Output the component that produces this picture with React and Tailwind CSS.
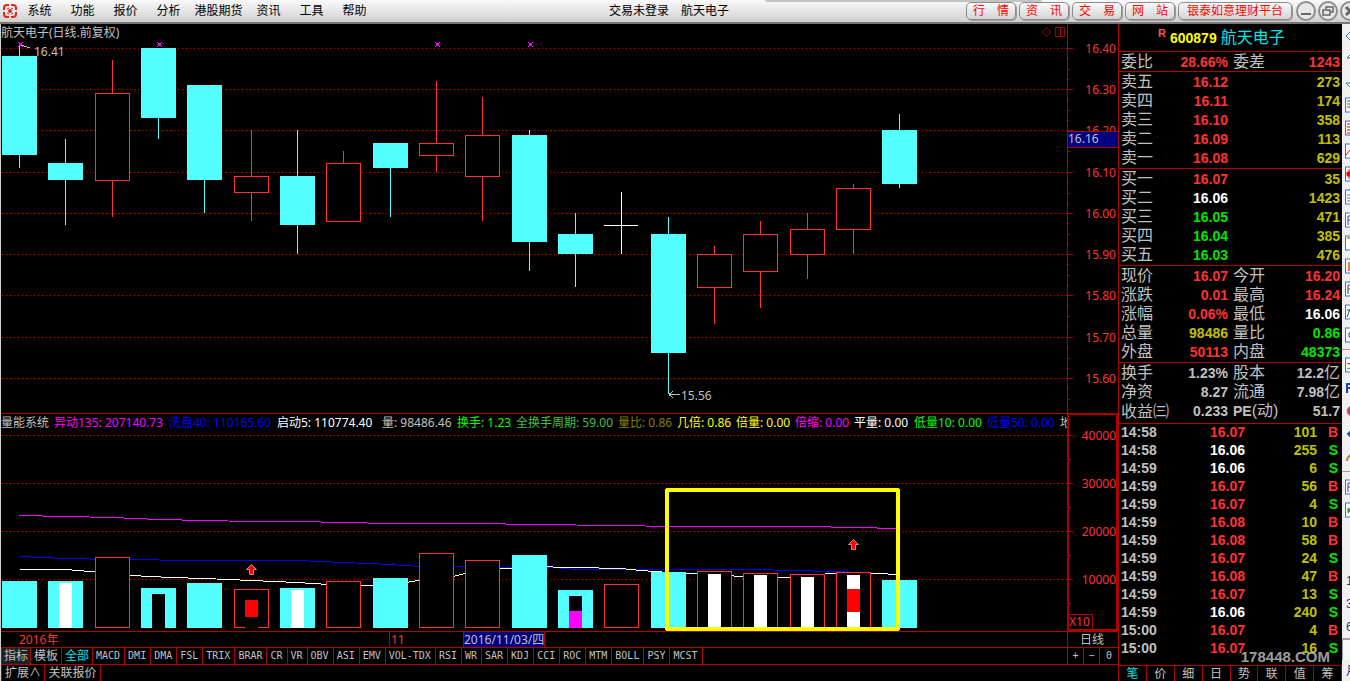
import { clsx } from "clsx";

const menuItems = ["系统", "功能", "报价", "分析", "港股期货", "资讯", "工具", "帮助"];
const linkButtons = ["行　情", "资　讯", "交　易", "网　站", "银泰如意理财平台"];

// kind: down = solid cyan, up = hollow red, flat = white cross
const candles = [
  { kind: "down", high: 16.41, top: 16.38, bottom: 16.14, low: 16.11 },
  { kind: "down", high: 16.18, top: 16.12, bottom: 16.08, low: 15.97 },
  { kind: "up", high: 16.37, top: 16.29, bottom: 16.08, low: 15.99 },
  { kind: "down", high: 16.4, top: 16.4, bottom: 16.23, low: 16.18 },
  { kind: "down", high: 16.31, top: 16.31, bottom: 16.08, low: 16.0 },
  { kind: "up", high: 16.2, top: 16.09, bottom: 16.05, low: 15.98 },
  { kind: "down", high: 16.2, top: 16.09, bottom: 15.97, low: 15.9 },
  { kind: "up", high: 16.15, top: 16.12, bottom: 15.98, low: 15.98 },
  { kind: "down", high: 16.17, top: 16.17, bottom: 16.11, low: 15.99 },
  { kind: "up", high: 16.32, top: 16.17, bottom: 16.14, low: 16.1 },
  { kind: "up", high: 16.28, top: 16.19, bottom: 16.09, low: 15.98 },
  { kind: "down", high: 16.2, top: 16.19, bottom: 15.93, low: 15.86 },
  { kind: "down", high: 16.0, top: 15.95, bottom: 15.9, low: 15.82 },
  { kind: "flat", high: 16.05, top: 15.97, bottom: 15.97, low: 15.9 },
  { kind: "down", high: 15.99, top: 15.95, bottom: 15.66, low: 15.56 },
  { kind: "up", high: 15.92, top: 15.9, bottom: 15.82, low: 15.73 },
  { kind: "up", high: 15.98, top: 15.95, bottom: 15.86, low: 15.77 },
  { kind: "up", high: 16.0, top: 15.96, bottom: 15.9, low: 15.84 },
  { kind: "up", high: 16.07, top: 16.06, bottom: 15.96, low: 15.9 },
  { kind: "down", high: 16.24, top: 16.2, bottom: 16.07, low: 16.06 },
];

// top of each volume bar, and the blocks drawn inside it: [top, bottom, color]
const volumes = [
  { top: 167 },
  { top: 167, inner: [[169, 214, "#ffffff"]] },
  { top: 143 },
  { top: 174, inner: [[180, 214, "#000000"]] },
  { top: 169 },
  { top: 175, inner: [[186, 203, "#ff0000"], [203, 214, "#000000"]] },
  { top: 174, inner: [[176, 214, "#ffffff"]] },
  { top: 167 },
  { top: 164 },
  { top: 139 },
  { top: 146 },
  { top: 141 },
  { top: 176, inner: [[182, 197, "#000000"], [197, 214, "#ff00ff"]] },
  { top: 170 },
  { top: 158 },
  { top: 157, inner: [[160, 214, "#ffffff"]] },
  { top: 159, inner: [[161, 214, "#ffffff"]] },
  { top: 160, inner: [[163, 214, "#ffffff"]] },
  { top: 158, inner: [[161, 175, "#ffffff"], [175, 198, "#ff0000"], [198, 214, "#ffffff"]] },
  { top: 166 },
];

const averages = [
  {
    color: "#ff00ff",
    points: "18,101 64,102 111,103 157,105 203,106 250,107 296,107 342,108 389,109 481,109 528,110 620,111 667,112 806,112 852,113 898,114",
  },
  {
    color: "#0000ff",
    points: "18,142 64,144 111,145 203,146 296,146 342,148 389,150 419,152 454,152 481,153 552,153 574,155 759,155 784,156 839,157 898,160",
  },
  {
    color: "#ffffff",
    points: "18,155 64,155 89,157 129,161 169,163 203,164 250,166 296,168 342,171 374,171 404,168 435,163 451,162 481,155 510,154 528,152 574,153 620,154 639,156 667,158 689,159 713,160 739,162 759,163 783,163 806,161 829,159 852,158 874,159 898,160",
  },
];

const priceLabels = ["16.40", "16.30", "16.20", "16.10", "16.00", "15.90", "15.80", "15.70", "15.60"];
const volumeLabels = ["40000", "30000", "20000", "10000"];

const readings = [
  { text: "量能系统", style: "w-[53px] text-[#c0c0c0]" },
  { text: "异动135: 207140.73", style: "w-[115px] text-[#ff00ff]" },
  { text: "洗盘40: 110165.60", style: "w-[108px] text-[#0000ff]" },
  { text: "启动5: 110774.40", style: "w-[105px] text-white" },
  { text: "量: 98486.46", style: "w-[75px] text-[#c0c0c0]" },
  { text: "换手: 1.23", style: "w-[59px] text-[#00ff00]" },
  { text: "全换手周期: 59.00", style: "w-[102px] text-[#40c040]" },
  { text: "量比: 0.86", style: "w-[59px] text-[#808000]" },
  { text: "几倍: 0.86", style: "w-[59px] text-[#ffff00]" },
  { text: "倍量: 0.00", style: "w-[59px] text-[#ffff00]" },
  { text: "倍缩: 0.00", style: "w-[59px] text-[#ff00ff]" },
  { text: "平量: 0.00", style: "w-[60px] text-white" },
  { text: "低量10: 0.00", style: "w-[73px] text-[#00ff00]" },
  { text: "低量50: 0.00", style: "w-[73px] text-[#0000ff]" },
  { text: "地", style: "w-6 text-[#c0c0c0]" },
];

const indicators = [
  "MACD", "DMI", "DMA", "FSL", "TRIX", "BRAR", "CR", "VR", "OBV", "ASI", "EMV", "VOL-TDX",
  "RSI", "WR", "SAR", "KDJ", "CCI", "ROC", "MTM", "BOLL", "PSY", "MCST",
];

const RED = "text-[#ff3232]";
const GREEN = "text-[#00e600]";
const YELLOW = "text-[#c0c000]";
const GRAY = "text-[#c0c0c0]";
const WHITE = "text-white";

const asks = [
  ["卖五", "16.12", "273", RED],
  ["卖四", "16.11", "174", RED],
  ["卖三", "16.10", "358", RED],
  ["卖二", "16.09", "113", RED],
  ["卖一", "16.08", "629", RED],
];

const bids = [
  ["买一", "16.07", "35", RED],
  ["买二", "16.06", "1423", WHITE],
  ["买三", "16.05", "471", GREEN],
  ["买四", "16.04", "385", GREEN],
  ["买五", "16.03", "476", GREEN],
];

const quoteRows = [
  ["现价", "16.07", RED, "今开", "16.20", RED],
  ["涨跌", "0.01", RED, "最高", "16.24", RED],
  ["涨幅", "0.06%", RED, "最低", "16.06", WHITE],
  ["总量", "98486", YELLOW, "量比", "0.86", GREEN],
  ["外盘", "50113", RED, "内盘", "48373", GREEN],
];

const financeRows = [
  ["换手", "1.23%", GRAY, "股本", "12.2亿", GRAY],
  ["净资", "8.27", GRAY, "流通", "7.98亿", GRAY],
  ["收益㈢", "0.233", GRAY, "PE(动)", "51.7", GRAY],
];

const ticks = [
  ["14:58", "16.07", "101", "B"],
  ["14:58", "16.06", "255", "S"],
  ["14:59", "16.06", "6", "S"],
  ["14:59", "16.07", "56", "B"],
  ["14:59", "16.07", "4", "S"],
  ["14:59", "16.08", "10", "B"],
  ["14:59", "16.08", "58", "B"],
  ["14:59", "16.07", "24", "S"],
  ["14:59", "16.08", "47", "B"],
  ["14:59", "16.07", "13", "S"],
  ["14:59", "16.06", "240", "S"],
  ["15:00", "16.07", "4", "B"],
  ["15:00", "16.07", "16", "S"],
];

const quoteTabs = ["笔", "价", "细", "日", "势", "联", "值", "筹"];

const priceY = (price) => Math.round(24 + (16.4 - price) * 412.5);
const barX = (i) => 18 + Math.round(i * 46.33);

const Logo = () => (
  <svg width="14" height="14" viewBox="0 0 14 14" fill="none" stroke="#e0281e" strokeWidth="2">
    <path d="M6 1H4a3 3 0 0 0-3 3v2M8 1h2a3 3 0 0 1 3 3v2M6 13H4a3 3 0 0 1-3-3V8M8 13h2a3 3 0 0 0 3-3V8" />
    <path d="M4 5l2-1M8 4l2 1M4 9l2 1M8 10l2-1" strokeWidth="1" />
    <circle cx="7" cy="7" r="2" fill="#e0281e" stroke="none" />
  </svg>
);

const WindowButton = ({ label, children }) => (
  <button aria-label={label} className="shrink-0">
    <svg width="20" height="20" viewBox="0 0 20 20" fill="none" stroke="#666" strokeWidth="2">
      <circle cx="10" cy="10" r="9" fill="#e8e8e8" stroke="#8c8c8c" />
      {children}
    </svg>
  </button>
);

const Header = () => (
  <header className="relative flex h-6 items-center overflow-hidden border-b-2 border-[#777] bg-linear-to-b from-[#fafafa] to-[#d0d0d0] text-[12px] text-black">
    <div className="absolute top-0 right-[308px] left-[765px] h-[2px] rounded-b bg-[#c4c4c4]" />
    <nav className="flex flex-1 items-center">
      <span className="w-[18px] shrink-0 pl-[3px]">
        <Logo />
      </span>
      {menuItems.map((item) => (
        <button key={item} className={clsx("shrink-0 text-center", item.length > 2 ? "w-[57px]" : "w-[43px]")}>
          {item}
        </button>
      ))}
    </nav>
    <h1 className="w-[132px] whitespace-nowrap">交易未登录　航天电子</h1>
    <div className="flex flex-1 items-center justify-end gap-[3px]">
      {linkButtons.map((label) => (
        <button
          key={label}
          className={clsx(
            "h-[18px] shrink-0 rounded-[5px] border border-[#8c8c8c] bg-linear-to-b from-[#fbfbfb] to-[#d4d4d4] leading-[14px] text-[#ff0000] shadow-[1px_1px_0_#999]",
            label.length > 3 ? "px-2" : "px-[6px]"
          )}
        >
          {label}
        </button>
      ))}
      <div className="ml-px flex w-[54px] gap-[2px] overflow-hidden">
        <WindowButton label="最小化">
          <path d="M5 13h10" />
        </WindowButton>
        <WindowButton label="还原">
          <path d="M8 8V6h7v5h-3M5 9h7v5H5z" strokeWidth="1.5" />
        </WindowButton>
        <WindowButton label="关闭">
          <path d="M6 6l8 8M14 6l-8 8" strokeWidth="3" />
        </WindowButton>
      </div>
    </div>
  </header>
);

const Candle = ({ candle, x }) => {
  const high = priceY(candle.high);
  const top = priceY(candle.top);
  const bottom = priceY(candle.bottom);
  const low = priceY(candle.low);

  if (candle.kind === "flat") {
    return (
      <g fill="#ffffff">
        <rect x={x} y={high} width="1" height={low - high} />
        <rect x={x - 17} y={top} width="34" height="1" />
      </g>
    );
  }
  if (candle.kind === "down") {
    return (
      <g fill="#54ffff">
        <rect x={x} y={high} width="1" height={low - high} />
        <rect x={x - 17} y={top} width="35" height={bottom - top} />
      </g>
    );
  }
  return (
    <g fill="#ff3232">
      <rect x={x} y={high} width="1" height={low - high} />
      <rect x={x - 17} y={top} width="35" height={bottom - top + 1} />
      <rect x={x - 16} y={top + 1} width="33" height={bottom - top - 1} fill="#000000" />
    </g>
  );
};

const PriceChart = () => (
  <section className="flex">
    <div className="relative min-w-0 flex-1">
      <h2 className="absolute top-0 left-0 text-[12px] leading-[18px] text-[#c0c0c0]">航天电子(日线.前复权)</h2>
      <svg className="block h-[389px] w-full" shapeRendering="crispEdges">
        {priceLabels.map((label) => (
          <line
            key={label}
            x1="1"
            x2="100%"
            y1={priceY(Number(label)) + 0.5}
            y2={priceY(Number(label)) + 0.5}
            stroke="#b00000"
            strokeDasharray="1 3"
          />
        ))}
        {candles.map((candle, i) => (
          <Candle key={i} candle={candle} x={barX(i)} />
        ))}
        {[18, 157, 435, 528].map((x) => (
          <path
            key={x}
            d={`M${x - 1} 18h1v1h3v-1h1v1h-1v3h1v1h-1v-1h-3v1h-1v-1h1v-3h-1z`}
            fill="#ff00ff"
          />
        ))}
        <path d="M20 21l9 3M668 370.5h11M668 370.5l4 -3M668 370.5l4 3" stroke="#c0c0c0" fill="none" />
        <g fill="#c0c0c0" fontSize="12">
          <text x="33" y="32">16.41</text>
          <text x="680" y="376">15.56</text>
        </g>
      </svg>
      <div className="absolute top-[2px] right-px flex gap-[3px] text-[#a00000]">
        <button aria-label="标记">
          <svg width="11" height="12" fill="none" stroke="currentColor">
            <path d="M5.5 1.5l4.5 4.5-4.5 4.5L1 6z" />
          </svg>
        </button>
        <button aria-label="分栏">
          <svg width="11" height="12" fill="none" stroke="currentColor" shapeRendering="crispEdges">
            <path d="M.5 1.5h9v9h-9zM5.5 1.5v9" />
          </svg>
        </button>
      </div>
    </div>
    <svg className="block h-[389px] w-[51px] shrink-0 text-[12px]" fill="#ff3232">
      <rect width="1" height="389" fill="#b00000" />
      {priceLabels.map((label) => {
        const y = priceY(Number(label));
        return (
          <g key={label}>
            <path
              d={`M1 ${y + 0.5}h5M1 ${y + 10.5}h1M1 ${y + 21.5}h2M1 ${y + 31.5}h1`}
              stroke="#b00000"
              shapeRendering="crispEdges"
            />
            <text x="49" y={y + 5} textAnchor="end">{label}</text>
          </g>
        );
      })}
      <rect y="107" width="51" height="17" fill="#b00000" />
      <rect x="1" y="108" width="50" height="15" fill="#000080" />
      <text x="1" y="119" fill="#c0c0c0">16.16</text>
    </svg>
  </section>
);

const VolumeChart = () => (
  <section className="flex">
    <div className="relative min-w-0 flex-1 border-t border-[#b00000]">
      <div className="absolute inset-x-0 top-0 flex overflow-hidden text-[12px] leading-[17px] whitespace-nowrap">
        {readings.map((item) => (
          <span key={item.text} className={clsx("shrink-0", item.style)}>{item.text}</span>
        ))}
      </div>
      <svg className="block h-[217px] w-full" shapeRendering="crispEdges">
        {volumeLabels.map((label, i) => (
          <line key={label} x1="1" x2="100%" y1={21.5 + i * 48} y2={21.5 + i * 48} stroke="#b00000" strokeDasharray="1 3" />
        ))}
        <g transform="translate(0.5 0.5)" fill="none">
          {averages.map((line) => (
            <polyline key={line.color} points={line.points} stroke={line.color} />
          ))}
        </g>
        {volumes.map((bar, i) => {
          const x = barX(i) - 17;
          const rising = candles[i].kind !== "down";
          return (
            <g key={i}>
              <rect x={x} y={bar.top} width="35" height={214 - bar.top} fill={rising ? "#ff3232" : "#54ffff"} />
              {rising && <rect x={x + 1} y={bar.top + 1} width="33" height={212 - bar.top} fill="#000000" />}
              {bar.inner?.map(([top, bottom, color]) => (
                <rect key={top} x={x + 11} y={top} width="13" height={bottom - top} fill={color} />
              ))}
            </g>
          );
        })}
        {[[250, 150], [852, 125]].map(([x, y]) => (
          <path
            key={x}
            d={`M${x + 0.5} ${y + 0.5}l5 5h-3v5h-4v-5h-3z`}
            fill="#ff0000"
            stroke="#c09090"
            shapeRendering="auto"
          />
        ))}
        <rect x="666" y="76" width="231" height="139" rx="1" fill="none" stroke="#ffff00" strokeWidth="4" />
      </svg>
    </div>
    <svg className="block h-[218px] w-[51px] shrink-0 text-[12px]" fill="#ff3232" shapeRendering="crispEdges">
      <rect x="1" y="1" width="49" height="216" fill="none" stroke="#b00000" strokeWidth="2" />
      {volumeLabels.map((label, i) => (
        <g key={label}>
          <path d={`M1 ${22.5 + i * 48}h5M1 ${46.5 + i * 48}h3`} stroke="#b00000" />
          <text x="49" y={27 + i * 48} textAnchor="end">{label}</text>
        </g>
      ))}
      <path d="M0 201.5h25.5v15" stroke="#b00000" fill="none" />
      <text x="2" y="213">X10</text>
    </svg>
  </section>
);

const DateRow = () => (
  <div className="flex h-4 border-t border-[#b00000] text-[12px] leading-[15px] text-[#ff3232]">
    <div className="flex min-w-0 flex-1">
      <span className="w-[388px] pl-[18px]">2016年</span>
      <span className="w-[74px] border-l border-[#b00000] pl-px">11</span>
      <span className="border-x border-[#b00000] bg-[#000080] whitespace-nowrap text-[#c0c0c0]">2016/11/03/四</span>
    </div>
    <span className="w-[51px] shrink-0 border-l border-[#b00000] pl-[12px] text-[#c0c0c0]">日线</span>
  </div>
);

const IndicatorTabs = () => (
  <div className="flex h-[18px] border-y border-[#b00000] text-[12px] leading-[16px] text-[#c0c0c0]">
    <div className="flex min-w-0 flex-1">
      <button className="w-[30px] border-x border-[#b00000] bg-[#202020]">指标</button>
      <button className="w-[31px] border-r border-[#b00000]">模板</button>
      <button className="w-[31px] border-r border-[#b00000] text-[#00e6e6]">全部</button>
      {indicators.map((name) => (
        <button
          key={name}
          className="shrink-0 border-r border-[#b00000] pr-[4px] pl-[3px] font-['DejaVu_Sans_Mono',monospace] text-[10px]"
        >
          {name}
        </button>
      ))}
    </div>
    <div className="flex w-[51px] shrink-0 font-['DejaVu_Sans_Mono',monospace] text-[10px]">
      <button className="w-4 border-l border-[#b00000]">+</button>
      <button className="w-4 border-l border-[#b00000]">−</button>
      <button className="flex-1 border-l border-[#b00000]">0</button>
    </div>
  </div>
);

// latin letters are bold 14px, chinese characters stay at 16px regular
const Label = ({ text }) => {
  if (text.startsWith("PE")) {
    return <><b className="text-[14px]">PE</b>(动)</>;
  }
  return text;
};

const Value = ({ text }) =>
  text.endsWith("亿") ? (
    <>
      {text.slice(0, -1)}
      <span className="text-[16px] leading-none font-normal">亿</span>
    </>
  ) : (
    text
  );

const BookTable = ({ rows }) => (
  <table className="w-full table-fixed">
    <tbody>
      {rows.map(([name, price, volume, color]) => (
        <tr key={name} className="h-[19px]">
          <th className="w-12 p-0 pl-[2px] text-left text-[16px] leading-[19px] font-normal text-[#c0c0c0]">{name}</th>
          <td className={clsx("w-[61px] p-0 text-right", color)}>{price}</td>
          <td className="p-0 pr-[2px] text-right text-[#c0c000]">{volume}</td>
        </tr>
      ))}
    </tbody>
  </table>
);

const PairTable = ({ rows }) => (
  <table className="w-full table-fixed">
    <tbody>
      {rows.map(([name, value, color, name2, value2, color2]) => (
        <tr key={name} className="h-[19px]">
          <th className="w-[50px] p-0 pl-[2px] text-left text-[16px] leading-[19px] font-normal whitespace-nowrap text-[#c0c0c0]">{name}</th>
          <td className={clsx("w-[59px] p-0 text-right", color)}>{value}</td>
          <th className="w-[50px] p-0 pl-[5px] text-left text-[16px] leading-[19px] font-normal whitespace-nowrap text-[#c0c0c0]">
            <Label text={name2} />
          </th>
          <td className={clsx("p-0 pr-[2px] text-right whitespace-nowrap", color2)}>
            <Value text={value2} />
          </td>
        </tr>
      ))}
    </tbody>
  </table>
);

const QuotePanel = () => (
  <aside className="relative flex w-[224px] shrink-0 flex-col border-l border-[#b00000] text-[14px] leading-[18px] font-bold">
    <h2 className="flex h-7 items-center gap-[4px] border-b border-[#b00000] pl-[39px] text-[#ffff00]">
      <span className="self-start pt-px text-[11px] leading-[16px] text-[#ff5050]">R</span>
      600879
      <span className="text-[16px] font-normal text-[#00e6e6]">航天电子</span>
    </h2>
    <div className="h-5 border-b border-[#b00000]">
      <PairTable rows={[["委比", "28.66%", RED, "委差", "1243", RED]]} />
    </div>
    <div className="border-b border-[#b00000] pb-px">
      <BookTable rows={asks} />
    </div>
    <div className="border-b border-[#b00000] pb-px">
      <BookTable rows={bids} />
    </div>
    <div className="border-b border-[#b00000] pb-px">
      <PairTable rows={quoteRows} />
    </div>
    <div className="border-b border-[#b00000] pb-[2px]">
      <PairTable rows={financeRows} />
    </div>
    <table className="w-full table-fixed leading-[16px]">
      <tbody className="align-top">
        {ticks.map(([time, price, volume, side], i) => (
          <tr key={i} className="h-[18px]">
            <td className="w-[60px] p-0 pl-[2px] text-[#c0c0c0]">{time}</td>
            <td className={clsx("w-[66px] p-0 text-right", price === "16.06" ? WHITE : RED)}>{price}</td>
            <td className="p-0 text-right text-[#c0c000]">{volume}</td>
            <td className={clsx("w-[25px] p-0 pr-[4px] text-right", side === "B" ? RED : GREEN)}>{side}</td>
          </tr>
        ))}
      </tbody>
    </table>
    <div className="flex-1" />
    <div className="flex h-4 border-t border-[#b00000] text-[12px] leading-[16px] font-normal text-[#c0c0c0]">
      {quoteTabs.map((tab, i) => (
        <button key={tab} className={clsx("flex-1 border-r border-[#b00000]", i === 0 && "text-[#00e6e6]")}>
          {tab}
        </button>
      ))}
    </div>
    <p className="pointer-events-none absolute right-[12px] bottom-[14px] text-[15px] leading-[20px] text-[#c8c8c8]/80">
      178448.COM
    </p>
  </aside>
);

const RailButton = ({ label, boxed = true, children }) => (
  <button aria-label={label} className="flex h-[23px] w-4 shrink-0 items-center">
    <svg width="16" height="16" viewBox="0 0 16 16" fill="none" stroke="#2878e0" className="shrink-0">
      {boxed && <rect x="3.5" y="1" width="14" height="14" fill="#ffffff" />}
      {children}
    </svg>
  </button>
);

const ToolRail = () => (
  <nav className="flex w-2 shrink-0 flex-col overflow-hidden bg-[#f0f0f0] text-[12px] text-[#1a3c8c]">
    <RailButton label="全屏" boxed={false}><path d="M9 3L4 8l5 5" /></RailButton>
    <RailButton label="向上" boxed={false}><path d="M10 2L5 7h8" /></RailButton>
    <RailButton label="向下" boxed={false}><path d="M13 9H4l5 5" /></RailButton>
    <RailButton label="列表"><path d="M5 4h10M5 7h10M5 10h10" stroke="#008000" /></RailButton>
    <RailButton label="成交"><path d="M5 4h10M5 7h10M5 10h10M5 13h10" stroke="#ff0000" /></RailButton>
    <RailButton label="分时"><path d="M4 12l4-5 3 3 4-6" stroke="#ff0000" /></RailButton>
    <RailButton label="K线"><path d="M7 3v10M5 6h3v4H5z" stroke="#ff0000" fill="#ff0000" /></RailButton>
    <RailButton label="剪贴板"><path d="M6 0h8M5 6h8M5 9h8M5 12h8" /></RailButton>
    <RailButton label="F10"><path d="M6 13V4h6M6 8h5" stroke="#2040c0" /></RailButton>
    <RailButton label="便签"><path d="M5 3h6v8" stroke="#f0a020" strokeWidth="2" /></RailButton>
    <RailButton label="柱图"><path d="M7 4v9" stroke="#ff7040" strokeWidth="2" /></RailButton>
    <RailButton label="公式"><path d="M6 13V4h6M6 8h5" stroke="#2040c0" /></RailButton>
    <RailButton label="指标"><path d="M5 13l3-8M5 6h8" stroke="#006090" /></RailButton>
    <RailButton label="圆点"><path d="M7 6h4v4H7z" stroke="#2040c0" /></RailButton>
    <hr className="my-[3px] w-full border-[#a0a0a0]" />
    <RailButton label="曲线"><path d="M5 6l2 1 4-4" stroke="#ff0000" /><path d="M5 12l2-1 4 3" /></RailButton>
    <RailButton label="研报" boxed={false}><path d="M5 13V4h6M5 8h6l2 5" stroke="#2040c0" strokeWidth="2" /></RailButton>
    <RailButton label="热点" boxed={false}><circle cx="10" cy="8" r="5" fill="#d04040" stroke="#a0a0a0" /></RailButton>
    <RailButton label="返回" boxed={false}><path d="M5 8l4-4v8z" fill="#1060d0" /></RailButton>
    <RailButton label="画笔" boxed={false}><path d="M5 12c0-4 3-6 7-7" stroke="#c08020" strokeWidth="2" /></RailButton>
    <hr className="my-[3px] w-full border-[#a0a0a0]" />
    <RailButton label="F功能"><path d="M6 13V4h6M6 8h5" stroke="#2040c0" /></RailButton>
    <RailButton label="行情图"><path d="M6 6v5l3-3z" stroke="#30a030" fill="#30a030" /></RailButton>
    <div className="h-12 shrink-0" />
    {["1", "3", "6"].map((period) => (
      <button key={period} className="h-[23px] shrink-0 pl-[4px] text-left">{period}</button>
    ))}
    <div className="h-[22px] shrink-0 border-t-2 border-l border-[#a0a0a0] bg-[#f8f8f8]" />
    <button className="min-h-0 flex-1 pl-[4px] text-left leading-[20px]">月</button>
  </nav>
);

export default function App() {
  return (
    <div className="min-h-screen overflow-hidden bg-black font-['Noto_Sans','Noto_Sans_CJK_SC',sans-serif]">
      <Header />
      <div className="flex">
        <main className="min-w-0 flex-1 border-l border-[#d0d0d0]">
          <PriceChart />
          <VolumeChart />
          <DateRow />
          <IndicatorTabs />
          <div className="flex h-4 text-[12px] leading-[16px] text-[#c0c0c0]">
            <button className="w-[44px] border-x border-[#b00000]">扩展∧</button>
            <button className="w-[56px] border-r border-[#b00000]">关联报价</button>
          </div>
        </main>
        <div className="flex shrink-0 font-['Liberation_Sans','Noto_Sans_CJK_SC',sans-serif]">
          <QuotePanel />
          <ToolRail />
        </div>
      </div>
    </div>
  );
}
